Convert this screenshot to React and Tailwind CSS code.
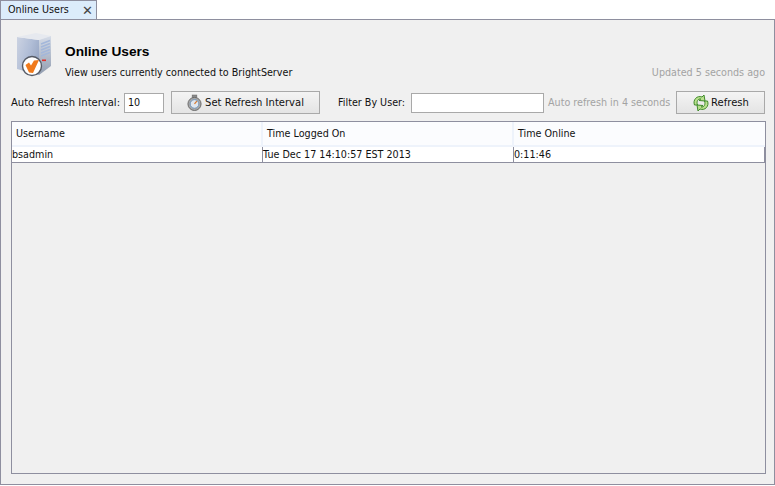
import React from 'react';

const ServerIcon = () => (
  <svg width="44" height="46" viewBox="0 0 44 46" className="shrink-0">
    <defs>
      <linearGradient id="side" x1="0" y1="0" x2="1" y2="0.5">
        <stop offset="0" stopColor="#ccd3e2" />
        <stop offset="0.6" stopColor="#b0bdd6" />
        <stop offset="1" stopColor="#9aa9c6" />
      </linearGradient>
      <linearGradient id="front" x1="0" y1="0" x2="0" y2="1">
        <stop offset="0" stopColor="#d5dce8" />
        <stop offset="1" stopColor="#929db0" />
      </linearGradient>
    </defs>
    <path d="M2 6 L24 9 L24 44 L2 38 Z" fill="url(#side)" />
    <path d="M2 6 L21 2 L36 5 L24 9 Z" fill="#e6e9ef" />
    <path d="M24 9 L36 5 L36 35 L24 44 Z" fill="url(#front)" />
    <path d="M26 13 L35 9.5 M26 16 L35 12.5 M26 19 L35 15.5 M26 22 L35 18.5 M26 25 L35 21.5" stroke="#a3b7da" strokeWidth="1.5" />
    <rect x="27" y="28.5" width="4" height="1.6" fill="#e0302a" />
    <circle cx="17" cy="35" r="9.5" fill="#fff" stroke="#565b66" strokeWidth="1.4" />
    <path d="M10.5 34 L14 31.5 L16 34.5 L19 29.5 L24 29 L18 42 L14 41.5 Z" fill="#f07a1c" />
  </svg>
);

const StopwatchIcon = () => (
  <svg width="15" height="18" viewBox="0 0 16 18" className="shrink-0">
    <rect x="5.5" y="0.5" width="5" height="2.5" fill="#8a8a8a" stroke="#666" strokeWidth="0.6" />
    <circle cx="8" cy="10" r="7" fill="#a8a8a8" stroke="#666" />
    <circle cx="8" cy="10" r="4.6" fill="#dfe6ee" stroke="#6f94bc" />
    <path d="M8 10 L10.5 7" stroke="#d9772b" strokeWidth="1.3" />
  </svg>
);

const RefreshIcon = () => (
  <svg width="18" height="18" viewBox="0 0 18 18" className="shrink-0" fill="none">
    <path d="M2.5 11 C0.5 6 5 1 10 3 L12 1 L13 7 L7 6.5 L8.8 5 C6 4.5 4.2 7.5 5.5 11 Z" fill="#b9e08e" stroke="#3f8a2a" strokeWidth="1" />
    <path d="M15.5 7 C17.5 12 13 17 8 15 L6 17 L5 11 L11 11.5 L9.2 13 C12 13.5 13.8 10.5 12.5 7 Z" fill="#b9e08e" stroke="#3f8a2a" strokeWidth="1" />
  </svg>
);

const users = [{ name: 'bsadmin', logged: 'Tue Dec 17 14:10:57 EST 2013', online: '0:11:46' }];
const columns = ['Username', 'Time Logged On', 'Time Online'];

export default function App() {
  return (
    <div className="w-[775px] h-[486px] bg-white flex flex-col overflow-hidden text-[9.6px] text-[#111] font-['DejaVu_Sans',sans-serif]">
      {/* Tab */}
      <div className="h-[20px] flex shrink-0">
        <div className="w-[97px] h-[20px] flex items-center justify-between pl-[7px] pr-[3px] bg-[#dcecfb] border border-b-0 border-[#8e8f9f]">
          <span>Online Users</span>
          <span className="text-[#444] text-[13px] leading-none">✕</span>
        </div>
      </div>

      {/* Panel */}
      <div className="w-[775px] h-[466px] -mt-px bg-[#f0f0f0] border border-[#8e8f9f] pl-[10px] pr-[8px] flex flex-col shrink-0">
        <div className="h-[70px] flex items-start pt-[11px] pl-[4px]">
          <ServerIcon />
          <div className="ml-[6px] pt-[12px] flex-1">
            <div className="text-[13.7px] font-bold text-black leading-[18px] font-['Liberation_Sans',sans-serif]">Online Users</div>
            <div className="flex justify-between mt-[5px] pr-[1px] leading-[14px]">
              <span>View users currently connected to BrightServer</span>
              <span className="text-[#a3a3a3]">Updated 5 seconds ago</span>
            </div>
          </div>
        </div>

        <div className="flex items-center h-[23px] mt-[1px]">
          <span className="w-[113px] text-[10px]">Auto Refresh Interval:</span>
          <input readOnly value="10" className="w-[40px] h-[20px] px-[3px] bg-white border border-[#a9a9a9] outline-none" />
          <button className="w-[149px] h-[23px] ml-[7px] flex items-center justify-center gap-[3px] text-[10px] bg-gradient-to-b from-[#f4f4f4] to-[#e4e4e4] border border-[#a9a9a9]">
            <StopwatchIcon />
            Set Refresh Interval
          </button>
          <span className="ml-[18px] w-[73px] pt-[1px]">Filter By User:</span>
          <input readOnly className="w-[133px] h-[20px] bg-white border border-[#a9a9a9] outline-none" />
          <span className="ml-[4px] w-[128px] pt-[1px] text-[#a3a3a3] whitespace-nowrap">Auto refresh in 4 seconds</span>
          <button className="w-[89px] h-[23px] flex items-center justify-center gap-[1px] text-[10px] bg-gradient-to-b from-[#f4f4f4] to-[#e4e4e4] border border-[#a9a9a9]">
            <RefreshIcon />
            Refresh
          </button>
        </div>

        {/* Table */}
        <div className="h-[353px] mt-[7px] border border-[#8e8f9f] flex flex-col">
          <div className="grid grid-cols-[251px_251px_1fr] h-[25px] bg-[#fbfcfe] border-b-2 border-[#eef3fb]">
            {columns.map((col) => (
              <div key={col} className="flex items-center pl-[4px] pt-[2px] border-r-2 border-[#eef3fb] last:border-r-0">{col}</div>
            ))}
          </div>
          {users.map((user) => (
            <div key={user.name} className="grid grid-cols-[251px_251px_1fr] h-[16px] bg-white border-b border-r border-[#8e8f9f] leading-[15px]">
              <div className="border-r border-[#8e8f9f]">{user.name}</div>
              <div className="border-r border-[#8e8f9f]">{user.logged}</div>
              <div>{user.online}</div>
            </div>
          ))}
        </div>
      </div>
    </div>
  );
}
